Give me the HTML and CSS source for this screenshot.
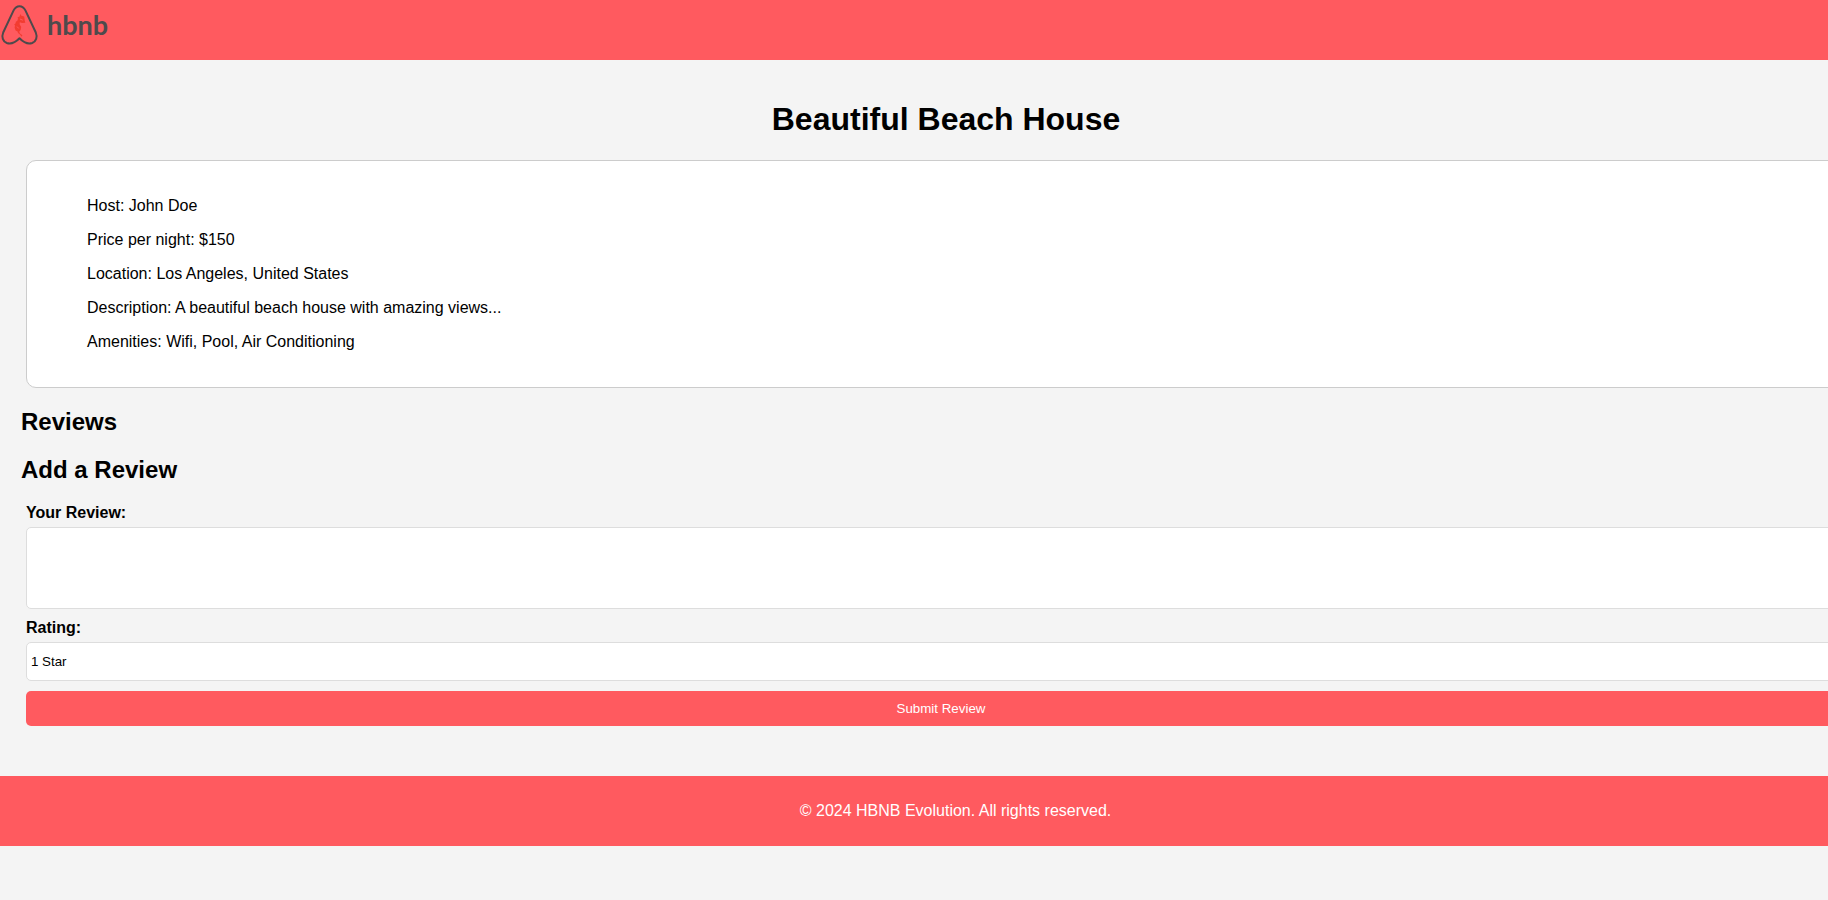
FILE: index.html
```html
<!DOCTYPE html>
<html lang="en">
<head>
<meta charset="utf-8">
<title>Place Details</title>
<link rel="stylesheet" href="styles.css">
</head>
<body>
<div class="page">
  <header class="header">
    <a class="logo" href="#" aria-label="hbnb">
      <svg class="logo-mark" viewBox="0 0 40 50" aria-hidden="true">
        <path d="M19.5 6.2C16.800 6.200 15 7.600 13.600 10.400L3.200 32.500C1.400 37 2.800 41.400 6.800 43C11.500 44.600 15.500 42.400 19.500 38.300C23.500 42.400 27.500 44.600 32.200 43C36.200 41.400 37.600 37 35.800 32.500L25.400 10.400C24 7.600 22.200 6.200 19.500 6.200Z" fill="none" stroke="#4f4a4c" stroke-width="2" stroke-linejoin="round"/>
        <path d="M20.200 14L21.400 15.800L24.200 16.600L24.800 21L25.400 22.800L22 23L19.800 22.200L19.600 24.200L21.200 27L20.600 30L19.200 31.800L20 33.400L22.400 35.200L21.400 36.800L20.200 34.800L18 33L17.600 31.600L15.600 30.400L14.600 27.800L15 25.600L14.200 24.400L15.600 23.200L15.800 21.800L17.400 20.800L18 18.400L17.600 17.200L19.600 16.400Z" fill="#f23c30"/>
        <path d="M20 19L22.800 20.200M17 26.500L18.800 28.500" fill="none" stroke="#ff5a5f" stroke-width="1"/>
      </svg>
      <span class="logo-text">hbnb</span>
    </a>
  </header>
  <main class="main">
    <h1 class="title">Beautiful Beach House</h1>
    <section class="details">
      <p>Host: John Doe</p>
      <p>Price per night: $150</p>
      <p>Location: Los Angeles, United States</p>
      <p>Description: A beautiful beach house with amazing views...</p>
      <p>Amenities: Wifi, Pool, Air Conditioning</p>
    </section>
    <section>
      <h2 class="heading">Reviews</h2>
    </section>
    <section>
      <h2 class="heading">Add a Review</h2>
      <form class="form">
        <label class="label" for="review">Your Review:</label>
        <textarea class="field review" id="review" name="review"></textarea>
        <label class="label" for="rating">Rating:</label>
        <select class="field rating" id="rating" name="rating">
          <option>1 Star</option>
          <option>2 Stars</option>
          <option>3 Stars</option>
          <option>4 Stars</option>
          <option>5 Stars</option>
        </select>
        <button class="submit" type="submit">Submit Review</button>
      </form>
    </section>
  </main>
  <footer class="footer">
    <p>© 2024 HBNB Evolution. All rights reserved.</p>
  </footer>
</div>
</body>
</html>
```

FILE: styles.css
```css
* {
  box-sizing: border-box;
}

body {
  margin: 0;
  overflow-x: hidden;
  background: #f4f4f4;
  color: #000;
  font-family: "Liberation Sans", Arial, sans-serif;
  font-size: 16px;
}

/* The page runs past the right edge of the window. */
.page {
  margin-right: -83px;
}

.header {
  height: 60px;
  background: #ff5a5f;
}

.logo {
  display: inline-flex;
  align-items: flex-start;
  gap: 7px;
  color: #4f4a4c;
  text-decoration: none;
}

.logo-mark {
  width: 40px;
  height: 50px;
}

.logo-text {
  font-family: Lato, sans-serif;
  font-size: 27px;
  font-weight: 700;
  line-height: 50px;
}

.main {
  padding: 20px 40px 50px 21px;
}

.title {
  margin: 20px 0 22px;
  font-size: 32px;
  line-height: 38px;
  text-align: center;
}

.details {
  margin: 0 5px;
  padding: 20px 60px;
  border: 1px solid #ccc;
  border-radius: 10px;
  background: #fff;
}

.details p {
  margin: 16px 0;
  line-height: 18px;
}

.heading {
  margin: 20px 0;
  font-size: 24px;
  line-height: 28px;
}

.form {
  display: flex;
  flex-direction: column;
  margin: 0 15px 0 5px;
}

.label {
  margin-bottom: 5px;
  font-weight: 700;
  line-height: 18px;
}

.field {
  margin: 0 0 10px;
  border: 1px solid #ddd;
  border-radius: 5px;
  background: #fff;
  color: #000;
  font-family: inherit;
}

.review {
  height: 82px;
  padding: 10px;
  resize: vertical;
}

.rating {
  height: 39px;
  padding: 0;
}

.submit {
  height: 35px;
  border: 0;
  border-radius: 5px;
  background: #ff5a5f;
  color: #fff;
  font-family: inherit;
}

.footer {
  padding: 10px;
  background: #ff5a5f;
  color: #fff;
  text-align: center;
}

.footer p {
  margin: 16px 0;
  line-height: 18px;
}
```
